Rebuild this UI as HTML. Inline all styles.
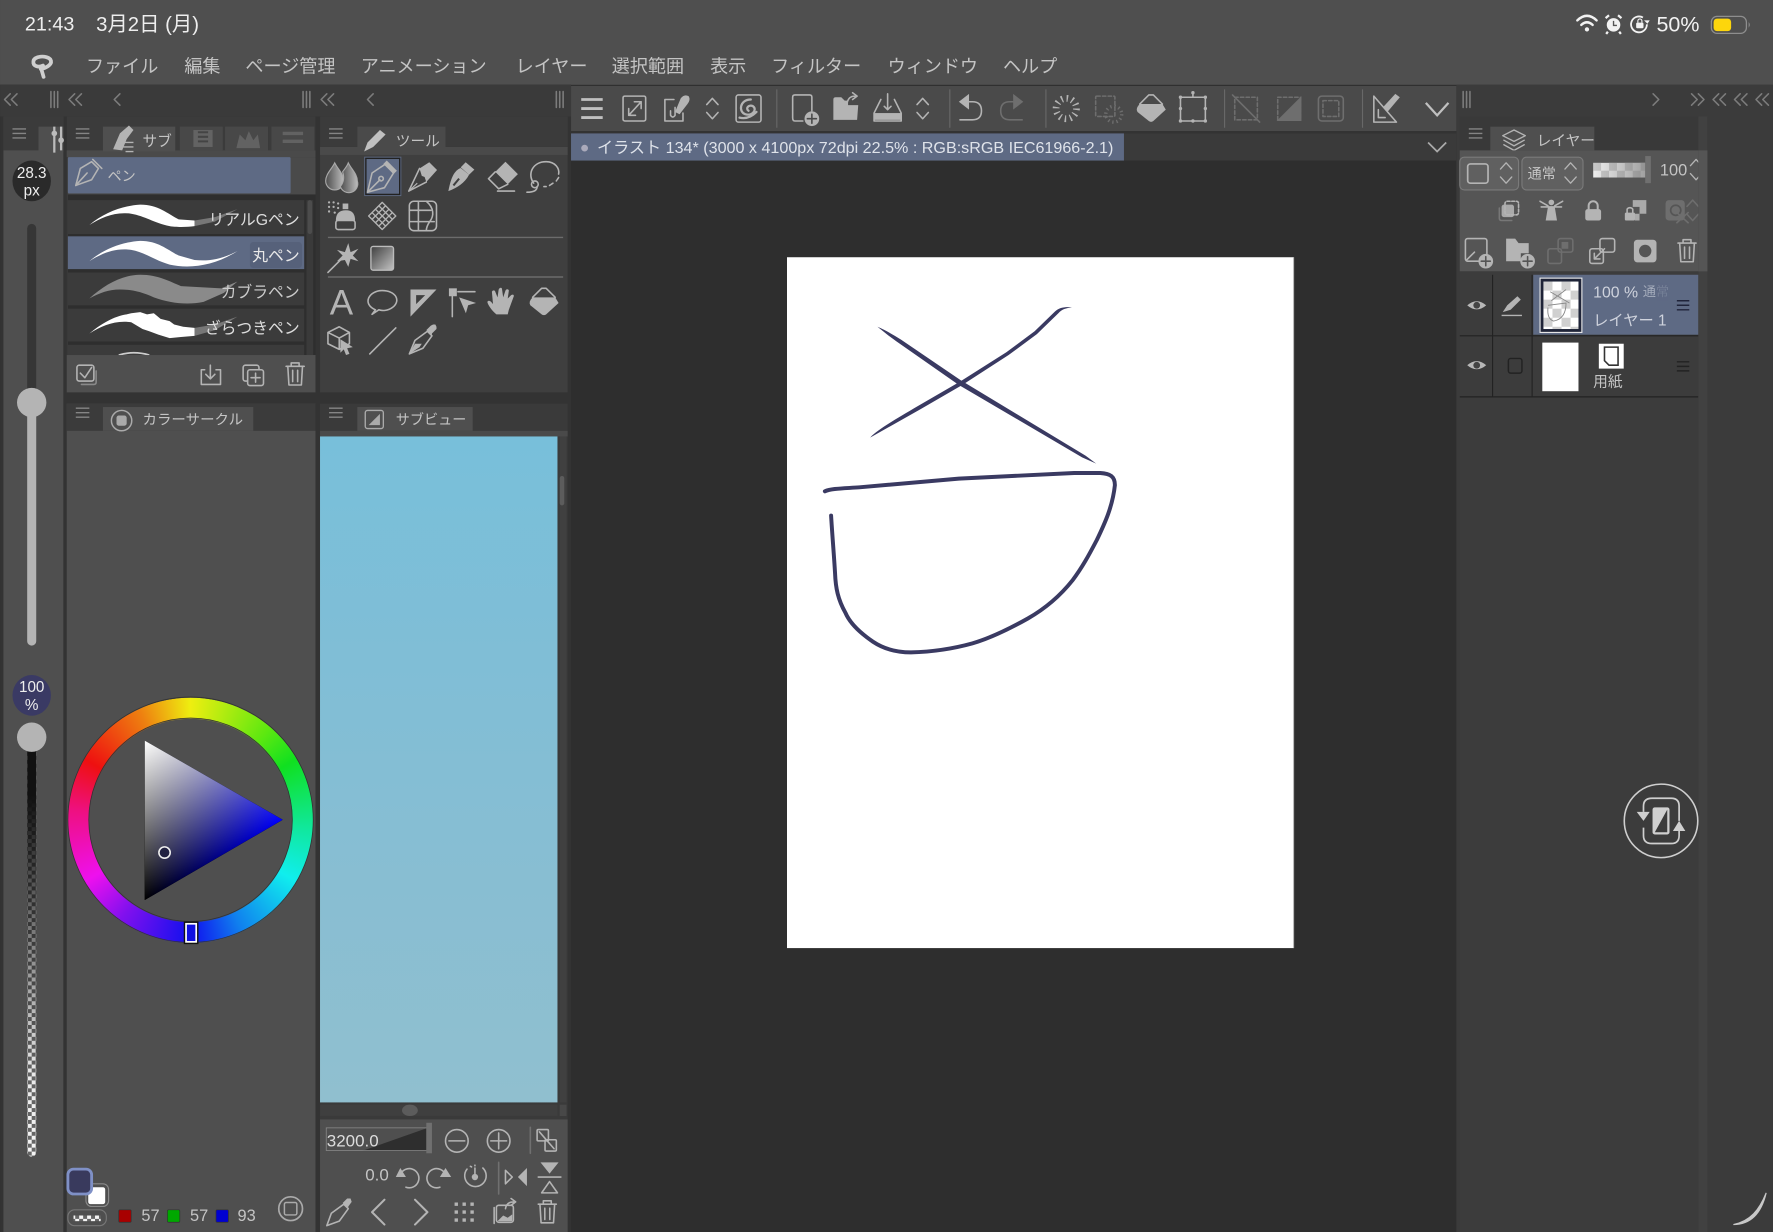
<!DOCTYPE html>
<html lang="ja">
<head>
<meta charset="utf-8">
<title>Clip Studio Paint</title>
<style>
html,body{margin:0;padding:0;background:#333;width:1773px;height:1232px;overflow:hidden}
svg{display:block}
text{font-family:"Liberation Sans","Noto Sans CJK JP",sans-serif;fill:#c4c4c4}
.ic{fill:none;stroke:#b4b4b4;stroke-width:1.4;stroke-linejoin:round;stroke-linecap:round}
.f{fill:#b4b4b4;stroke:none}
.dim{fill:none;stroke:#6e6e6e;stroke-width:1.4;stroke-linejoin:round;stroke-linecap:round}
.df{fill:#6e6e6e;stroke:none}
.nav{fill:none;stroke:#7c7c7c;stroke-width:1.4;stroke-linecap:round;stroke-linejoin:round}
.men{fill:none;stroke:#858585;stroke-width:1.2}
</style>
</head>
<body>
<svg xmlns="http://www.w3.org/2000/svg" width="1773" height="1232" viewBox="0 0 1568 1089.6">
<defs>
<pattern id="chk" width="16" height="16" patternUnits="userSpaceOnUse" x="1365" y="249"><rect width="16" height="16" fill="#fff"/><rect width="8" height="8" fill="#d0d0d0"/><rect x="8" y="8" width="8" height="8" fill="#d0d0d0"/></pattern>
<pattern id="chs" width="7" height="7" patternUnits="userSpaceOnUse"><rect width="7" height="7" fill="#f4f4f4"/><rect width="3.5" height="3.5" fill="#666"/><rect x="3.5" y="3.5" width="3.5" height="3.5" fill="#666"/></pattern>
<pattern id="cha" width="14" height="14" patternUnits="userSpaceOnUse" x="1409" y="144"><rect width="14" height="14" fill="#eee"/><rect width="7" height="7" fill="#c8c8c8"/><rect x="7" y="7" width="7" height="7" fill="#c8c8c8"/></pattern>
<linearGradient id="afade" x1="0" y1="0" x2="1" y2="0"><stop offset="0" stop-color="#777" stop-opacity="0"/><stop offset="1" stop-color="#777" stop-opacity=".65"/></linearGradient>
<linearGradient id="fade" x1="0" y1="0" x2="0" y2="1"><stop offset="0" stop-color="#111"/><stop offset=".12" stop-color="#111"/><stop offset=".8" stop-color="#111" stop-opacity=".05"/><stop offset="1" stop-color="#111" stop-opacity="0"/></linearGradient>
<linearGradient id="pv" x1="0" y1="0" x2="0" y2="1"><stop offset="0" stop-color="#78bfda"/><stop offset=".5" stop-color="#84bed4"/><stop offset="1" stop-color="#90bfcf"/></linearGradient>
<linearGradient id="tw" gradientUnits="userSpaceOnUse" x1="128" y1="655" x2="189.3" y2="760.3"><stop offset="0" stop-color="#fff"/><stop offset="1" stop-color="#000"/></linearGradient>
<linearGradient id="tb" gradientUnits="userSpaceOnUse" x1="128" y1="725" x2="250" y2="725"><stop offset="0" stop-color="#000"/><stop offset="1" stop-color="#00f"/></linearGradient>
<linearGradient id="drop" x1="0" y1="0" x2="1" y2="0"><stop offset="0" stop-color="#4c4c4c"/><stop offset="1" stop-color="#bdbdbd"/></linearGradient>
<linearGradient id="grad" x1="0" y1="0" x2="1" y2="1"><stop offset="0" stop-color="#3e3e3e"/><stop offset="1" stop-color="#c4c4c4"/></linearGradient>
<g id="m" class="men"><path d="M-6 -4H6M-6 0H6M-6 4H6"/></g>
<path id="ud" d="M-5 -3.5L0 -9L5 -3.5M-5 3.5L0 9L5 3.5"/>
<path id="dbl" d="M5 -5L0 0L5 5M11 -5L6 0L11 5"/>
<path id="dbr" d="M0 -5L5 0L0 5M6 -5L11 0L6 5"/>
<path id="grip" d="M-3 -7V7M0 -7V7M3 -7V7"/>
<path id="trash" d="M-8 -7H8M-3.500 -7V-10H3.500V-7M-6.500 -7L-5.500 9.500H5.500L6.500 -7M-2.200 -3.500V6.500M2.200 -3.500V6.500"/>
<path id="eye" d="M-9 0Q0 -8 9 0Q0 8 -9 0Z"/>
</defs>

<!-- base -->
<rect width="1568" height="1090" fill="#2e2e2e"/>
<rect width="1568" height="75" fill="#4f4f4f"/>
<rect y="75" width="505" height="1015" fill="#333"/>
<rect y="75" width="505" height="28" fill="#3a3a3a"/>
<rect x="1288" y="75" width="280" height="1015" fill="#3b3b3b"/>

<!-- status bar -->
<text x="22" y="27" font-size="17.500" style="fill:#eee">21:43</text>
<text x="85" y="27.500" font-size="18" style="fill:#eee">3月2日 (月)</text>
<g fill="none" stroke="#f2f2f2" stroke-width="2.200" stroke-linecap="round"><path d="M1395 18Q1403.500 10 1412 18M1398.500 22Q1403.500 17.500 1408.500 22"/></g><circle cx="1403.500" cy="26" r="1.900" fill="#f2f2f2"/>
<circle cx="1427" cy="22" r="6" fill="#f2f2f2"/><path d="M1420 16l3 -2.500M1434 16l-3 -2.500M1422 28l-1.500 2M1432 28l1.500 2" stroke="#f2f2f2" stroke-width="2" fill="none"/><path d="M1427 18.500V22.500H1430" stroke="#555" stroke-width="1.200" fill="none"/>
<path d="M1456.500 21.500A7 7 0 1 1 1453 15.500" stroke="#f2f2f2" stroke-width="1.600" fill="none"/><path d="M1457 21l-3 -3h5z" fill="#f2f2f2"/><rect x="1447" y="20" width="6.500" height="5" rx="1" fill="#f2f2f2"/><path d="M1448.500 20v-1.500a1.800 1.800 0 0 1 3.600 0V20" stroke="#f2f2f2" fill="none"/>
<text x="1465" y="28" font-size="19" style="fill:#f2f2f2">50%</text>
<rect x="1513.500" y="14.500" width="31" height="15" rx="5" fill="none" stroke="#8e8e8e" stroke-width="1.100"/><rect x="1515.500" y="16.500" width="15.500" height="11" rx="3" fill="#fdd60c"/><path d="M1546.500 19.500v5q2 -2.500 0 -5z" fill="#8e8e8e"/>

<!-- menu -->
<path d="M29.500 54.500C29.500 49.500 41 48.500 44.500 52.500C47 56.500 41.500 60 36 61M29.500 54.500C29 58.500 34 60 38 58M36.500 61L38.500 68" fill="none" stroke="#cfcfcf" stroke-width="3.300" stroke-linecap="round"/>
<g font-size="16">
<text x="76" y="64">ファイル</text><text x="163" y="64">編集</text><text x="217" y="64">ページ管理</text><text x="319" y="64">アニメーション</text><text x="456" y="64">レイヤー</text><text x="541" y="64">選択範囲</text><text x="628" y="64">表示</text><text x="682" y="64">フィルター</text><text x="785" y="64">ウィンドウ</text><text x="887" y="64">ヘルプ</text>
</g>

<!-- row nav -->
<g class="nav">
<use href="#dbl" x="4" y="88"/><use href="#grip" x="48" y="88"/><use href="#dbl" x="61" y="88"/><path d="M106 83L101 88L106 93"/><use href="#grip" x="271" y="88"/><use href="#dbl" x="284" y="88"/><path d="M330 83L325 88L330 93"/><use href="#grip" x="495" y="88"/>
<use href="#grip" x="1297" y="88"/><path d="M1462 83L1467 88L1462 93"/><use href="#dbr" x="1496" y="88"/><use href="#dbl" x="1515" y="88"/><use href="#dbl" x="1534" y="88"/><use href="#dbl" x="1553" y="88"/>
</g>

<!-- left slider panel -->
<rect x="3" y="103" width="53" height="987" fill="#4f4f4f"/>
<rect x="3" y="103" width="53" height="30" fill="#3b3b3b"/>
<rect x="34" y="112" width="22" height="22" fill="#4f4f4f"/>
<use href="#m" x="17" y="118"/>
<path d="M48 112V135M54 112V133" stroke="#bbb" stroke-width="2"/><circle cx="48" cy="118" r="2.500" fill="#bbb"/><circle cx="54" cy="124" r="2.500" fill="#bbb"/>
<ellipse cx="28" cy="160" rx="17" ry="18" fill="#2a2a2a"/>
<text x="28" y="157.500" font-size="13.500" text-anchor="middle" style="fill:#eee">28.3</text><text x="28" y="173" font-size="13.500" text-anchor="middle" style="fill:#eee">px</text>
<rect x="24" y="198" width="8" height="160" rx="4" fill="#363636"/>
<rect x="24" y="352" width="8" height="219" rx="4" fill="#b4b4b4"/>
<circle cx="28" cy="356" r="13" fill="#b4b4b4"/>
<ellipse cx="28" cy="615" rx="17" ry="18" fill="#3a3a64"/>
<text x="28" y="612" font-size="13.500" text-anchor="middle" style="fill:#eee">100</text><text x="28" y="628" font-size="13.500" text-anchor="middle" style="fill:#eee">%</text>
<rect x="24" y="660" width="8" height="363" rx="4" fill="url(#chs)"/>
<rect x="24" y="660" width="8" height="363" rx="4" fill="url(#fade)"/>
<circle cx="28" cy="652" r="13" fill="#b4b4b4"/>

<!-- sub tool panel -->
<rect x="59" y="103" width="220" height="244" fill="#3b3b3b"/>
<rect x="59" y="133" width="220" height="6" fill="#4a4a4a"/>
<use href="#m" x="73" y="118"/>
<rect x="91" y="112" width="64" height="22" fill="#4f4f4f"/>
<rect x="159" y="112" width="38" height="21" fill="#484848"/><rect x="199" y="112" width="38" height="21" fill="#484848"/><rect x="240" y="112" width="38" height="21" fill="#484848"/>
<path d="M100 132L106 118L114 111L118 115L112 123L108 133Z" class="f"/><path d="M109 126H118M109 130H118M111 134H118" stroke="#b4b4b4" stroke-width="1.200"/>
<text x="126" y="129" font-size="13">サブ</text>
<rect x="171" y="115" width="17" height="15" fill="#636363"/><path d="M175 117H184M175 121H184M175 125H184" stroke="#444" stroke-width="1.800"/>
<path d="M209 131L212 119L217 124L220 116L224 124L228 119L230 131Z" fill="#626262"/>
<path d="M250 118H268M250 125H268" stroke="#626262" stroke-width="3"/>
<rect x="60" y="139" width="219" height="33" fill="#4a4a4a"/>
<rect x="60" y="139" width="197" height="32" rx="1" fill="#5e6a84"/>
<g class="ic"><path d="M67 164L71 149L81 143L87 149L81 159Z"/><path d="M82 141L90 149M67 164L77 153" /></g>
<text x="95" y="160" font-size="12.500">ペン</text>
<rect x="60" y="172" width="219" height="142" fill="#2e2e2e"/>
<rect x="60" y="177" width="209" height="30" fill="#3b3b3b"/>
<rect x="60" y="209" width="209" height="29" fill="#5e6a84"/>
<rect x="60" y="241" width="209" height="29" fill="#3b3b3b"/>
<rect x="60" y="273" width="209" height="29" fill="#3b3b3b"/>
<rect x="60" y="305" width="209" height="9" fill="#3b3b3b"/>
<rect x="271" y="177" width="6" height="137" fill="#3a3a3a"/><rect x="272" y="177" width="4" height="30" rx="2" fill="#4c4c4c"/>
<g transform="translate(0 177)"><path d="M79 22C92 11 108 5 124 4C140 4 148 12 158 17L172 18L172 23C165 24 155 24 150 23C136 20 128 14 116 12C102 10 90 15 79 22Z" fill="#fff"/><path d="M172 18L190 15L210 8L190 19L172 23Z" fill="#777"/></g>
<path transform="translate(0 209)" d="M79 22C92 11 108 5 124 4C140 4 148 12 158 17L172 21C184 22 195 21 210 13C190 26 168 29 150 25C136 21 128 14 116 12C102 10 90 15 79 22Z" fill="#fff"/>
<path transform="translate(0 241)" d="M79 23C92 11 108 2 124 2C140 2 150 8 160 12L196 14L210 8L198 18L180 26C165 29 150 27 136 22C125 17 116 15 106 15C96 15 88 18 79 23Z" fill="#8a8a8a"/>
<g transform="translate(0 273)"><path d="M79 22C92 11 104 6 112 5L116 4L124 3L130 5L136 4L142 9L150 11L154 14L162 16L172 17L172 24L160 25L150 26L140 23L132 20L126 18L116 12C102 10 90 15 79 22Z" fill="#fff"/><path d="M172 17L190 14L210 7L190 19L172 24Z" fill="#777"/></g>
<path d="M105 314Q118 310 132 314" stroke="#ccc" stroke-width="1.500" fill="none"/>
<g font-size="14" text-anchor="end"><text x="265" y="199" style="fill:#ddd">リアルGペン</text>
<rect x="221" y="214" width="46" height="23" rx="3" fill="#56617a"/><text x="265" y="231" style="fill:#e8e8e8">丸ペン</text>
<text x="265" y="263" style="fill:#ccc">カブラペン</text><text x="265" y="295" style="fill:#ddd">ざらつきペン</text></g>
<rect x="59" y="314" width="220" height="33" fill="#4f4f4f"/>
<g class="ic"><rect x="68" y="323" width="15" height="14" rx="2"/><path d="M71 330L75 334L81 325"/><path d="M85 328V338Q85 340 83 340H72" stroke="#8a8a8a"/>
<path d="M181 327H178V340H195V327H191M186 323V335M182 331L186 335L190 331"/>
<rect x="215" y="323" width="14" height="14" rx="2"/><rect x="219" y="327" width="14" height="14" rx="2" fill="#4f4f4f"/><path d="M226 330V338M222 334H230"/>
<use href="#trash" x="261" y="331"/></g>

<!-- colour circle panel -->
<rect x="59" y="357" width="220" height="733" fill="#4f4f4f"/>
<rect x="59" y="357" width="220" height="24" fill="#3b3b3b"/>
<rect x="91" y="360" width="133" height="21" fill="#4f4f4f"/>
<use href="#m" x="73" y="365"/>
<circle cx="107.500" cy="372" r="9" fill="none" stroke="#aaa" stroke-width="1.300"/><rect x="103" y="367.500" width="9" height="9" rx="2" fill="#aaa"/>
<text x="126" y="375.500" font-size="12.800">カラーサークル</text>
<foreignObject x="60" y="616.500" width="217" height="217"><div xmlns="http://www.w3.org/1999/xhtml" style="width:217px;height:217px;border-radius:50%;background:conic-gradient(#eeee10 0deg,#5fe810 40deg,#10e020 60deg,#10e8a0 95deg,#10eeee 120deg,#1080ee 155deg,#1010ee 180deg,#8010ee 215deg,#ee10ee 240deg,#ee1080 275deg,#ee1010 300deg,#ee8010 335deg,#eeee10 360deg);-webkit-mask:radial-gradient(circle,transparent 89.500px,#000 90.500px);mask:radial-gradient(circle,transparent 89.500px,#000 90.500px)"></div></foreignObject>
<circle cx="168.500" cy="725" r="108.500" fill="none" stroke="#333" stroke-width=".7"/><circle cx="168.500" cy="725" r="90" fill="none" stroke="#333" stroke-width=".7"/>
<g style="isolation:isolate"><polygon points="128,655 250,725 128,796" fill="#000"/><polygon points="128,655 250,725 128,796" fill="url(#tw)" style="mix-blend-mode:screen"/><polygon points="128,655 250,725 128,796" fill="url(#tb)" style="mix-blend-mode:screen"/></g>
<circle cx="145.500" cy="754" r="5" fill="#222242" stroke="#eee" stroke-width="1.400"/>
<rect x="162.500" y="815" width="13" height="20" fill="#111"/><rect x="164.500" y="817" width="9" height="16" fill="#1010e0" stroke="#fff" stroke-width="1.500"/>
<rect x="76" y="1047" width="20" height="20" rx="5" fill="#4f4f4f" stroke="#8a8a8a"/><rect x="78" y="1050" width="15" height="15" rx="2" fill="#fff"/>
<rect x="60" y="1034" width="21" height="22" rx="5" fill="#393a5d" stroke="#7f90c6" stroke-width="2.500"/>
<rect x="60" y="1070" width="34" height="14" rx="6" fill="#4f4f4f" stroke="#777"/><rect x="65" y="1075" width="24" height="5" fill="url(#chs)"/>
<rect x="105" y="1070" width="11" height="11" rx="1" fill="#a80000" stroke="#333" stroke-width=".6"/><text x="125" y="1080" font-size="14.500">57</text>
<rect x="148" y="1070" width="11" height="11" rx="1" fill="#00a800" stroke="#333" stroke-width=".6"/><text x="168" y="1080" font-size="14.500">57</text>
<rect x="191" y="1070" width="11" height="11" rx="1" fill="#0000d0" stroke="#333" stroke-width=".6"/><text x="210" y="1080" font-size="14.500">93</text>
<circle cx="257" cy="1069" r="10.500" fill="none" stroke="#aaa" stroke-width="1.500"/><rect x="251.500" y="1063.500" width="11" height="11" rx="1.500" fill="none" stroke="#aaa" stroke-width="1.300"/>

<!-- tool panel -->
<rect x="283" y="103" width="219" height="244" fill="#3f3f3f"/>
<rect x="283" y="103" width="219" height="28" fill="#3b3b3b"/>
<rect x="283" y="130" width="219" height="7" fill="#4a4a4a"/>
<rect x="316" y="112" width="78" height="20" fill="#4a4a4a"/>
<use href="#m" x="297" y="118"/>
<path d="M322 134L325 126L336 115L341 119L330 130Z" fill="#c0c0c0"/>
<text x="350" y="129" font-size="13">ツール</text>
<!-- row 1 -->
<rect x="323.500" y="140" width="30" height="32" fill="#5e6a84" stroke="#222" stroke-width="1.300"/>
<rect x="322.500" y="139" width="32" height="34" fill="none" stroke="#5e6a84" stroke-width=".8"/>
<g transform="translate(302 156)"><path d="M-6 -12C-3 -6 2 -2 2 4A7.800 7.800 0 0 1 -14 4C-14 -2 -9 -6 -6 -12Z" fill="url(#drop)" stroke="#aaa"/><path d="M6 -12C9 -6 14 -2 14 4A7.800 7.800 0 0 1 -1 9C3 4 2 -1 1 -4C3 -7 5 -9 6 -12Z" fill="url(#drop)" stroke="#aaa"/></g>
<g transform="translate(338 156)" class="ic"><path d="M-13 14L-9 -3L3 -11L10 -3L2 10Z"/><path d="M-13 14L-2 3"/><circle cx="-1" cy="2" r="2"/><path class="f" d="M4 -14L13 -5L10 -2L1 -11Z"/></g>
<g transform="translate(374 156)"><path class="f" d="M-3 -7L5.600 -12.500L12.500 -5.600L3 5L1.500 0.500L-1 -0.500Z"/><path class="ic" d="M-12.500 13L-3 -7M-12.500 13L3 5"/><path d="M-12.500 13L-5 6" stroke="#b4b4b4"/></g>
<g transform="translate(408 156)"><path class="f" d="M3.800 -12.500L11.500 -6L6.800 -1.500L-0.600 -8Z"/><path class="f" d="M-0.600 -7.400C-6 -5 -9 0 -11.500 13C-4 10 3 6 6.800 -1.500Z"/><path d="M-7 8L-2 2" stroke="#3f3f3f" stroke-width="1.800"/></g>
<g transform="translate(444 156)"><path class="f" d="M3 -13L14 -2L5 7L-6 -4Z"/><path class="ic" d="M-6 -4L-12 2L-3 11L5 7M-4 13H11"/></g>
<g transform="translate(481 156)" class="ic"><path d="M-9 6C-15 -2 -10 -13 2 -13C10 -13 14 -7 13 -2" /><path d="M13 1L11 4M8 6L5 8M2 9L-1 9" stroke-dasharray="2 1"/><circle cx="-8" cy="7" r="3"/><path d="M-15 14Q-6 14 -6 9"/></g>
<!-- row 2 -->
<g transform="translate(302 191)"><g class="f"><circle cx="-11" cy="-12" r="1"/><circle cx="-7" cy="-12" r="1"/><circle cx="-3" cy="-11" r="1"/><circle cx="-11" cy="-8" r="1"/><circle cx="-7" cy="-8" r="1"/><circle cx="-3" cy="-7" r="1"/><circle cx="-11" cy="-4" r="1"/><circle cx="-6" cy="-3" r="1"/></g><rect class="f" x="1" y="-11" width="5" height="5"/><path class="f" d="M-5 4Q-5 -5 4 -5Q12 -5 12 4Z"/><rect class="ic" x="-5" y="4" width="17" height="8" rx="2"/></g>
<g transform="translate(338 191)" class="ic" style="stroke-width:1.200"><path d="M-12 0L0 -12L12 0L0 12ZM-6 -6L6 6M-6 6L6 -6M-3 -9L9 3M3 -9L-9 3M-9 -3L3 9M9 -3L-3 9"/></g>
<g transform="translate(374 191)" class="ic"><rect x="-12" y="-13" width="24" height="26" rx="4"/><path d="M-12 -5H7M-12 5H10M-4 -13V13M3 -13C10 -7 10 0 6 5C4 8 3 10 3 13"/></g>
<path d="M290 210H498M290 245H498" stroke="#6c6c6c" stroke-width="1.300"/>
<!-- row 3 -->
<g transform="translate(304 228)"><path class="f" d="M4 -13L6 -5L13 -8L8 -2L13 3L6 1L4 8L1 2L-6 3L-1 -2L-6 -7L1 -5Z"/><path class="ic" d="M-3 2L-14 13"/></g>
<rect x="328" y="218" width="20" height="21" rx="2" fill="url(#grad)" stroke="#bbb" stroke-width="1.200"/>
<!-- row 4 -->
<text x="302" y="278" font-size="31" text-anchor="middle" style="fill:#b4b4b4">A</text>
<g transform="translate(338 267)" class="ic"><path d="M-6 7C-18 2 -12 -10 0 -10C12 -10 17 -1 9 5C5 8 0 8 -3 7L-9 11Z"/></g>
<g transform="translate(374 267)"><path class="f" fill-rule="evenodd" d="M-11 -11H12L-11 13ZM-6 -6V2L2 -6Z"/></g>
<g transform="translate(408 267)"><rect class="f" x="-11" y="-12" width="7" height="7"/><path class="ic" d="M-8 -5V13M-3 -9H12"/><path class="f" d="M-2 -4L13 1L6 3L4 10Z"/></g>
<g transform="translate(444 267)"><path class="f" d="M-5 11C-9 8 -13 2 -13 0C-12 -2 -10 -1 -8 2L-9 -9C-8 -11 -6 -10 -6 -9L-4 -4L-3 -11C-2 -13 0 -13 0 -11L1 -4L3 -10C4 -12 6 -11 6 -10L5 -3L8 -6C10 -7 11 -6 10 -4L6 7L5 11Z"/></g>
<g transform="translate(481 267)"><path class="f" d="M-10 -4H10L13 1L2 11Q0 12.500 -2 11L-12 3Q-14 0 -10 -4Z"/><path class="ic" d="M-10 -4L-2 -12H2L10 -4"/></g>
<!-- row 5 -->
<g transform="translate(300 300)" class="ic"><path d="M-10 -6L0 -11L9 -6V4L0 9L-10 4ZM-10 -6L0 -1L9 -6M0 -1V9"/><path class="f" d="M1 0L12 7L7 8L9 13L6 14L4 9L1 12Z" stroke="#3f3f3f"/></g>
<path class="ic" d="M327 313L350 290"/>
<g transform="translate(374 300)"><path class="ic" d="M-12 13L-7 1L4 -7L8 -3L0 8Z"/><path class="f" d="M3 -8L7 -12L9 -13L11 -13L12 -11L12 -9L8 -5L8 -4Z"/><path class="f" d="M-7 4L-1 4L-3 7L-12 13Z"/></g>

<!-- subview -->
<rect x="283" y="357" width="219" height="733" fill="#3a3a3a"/>
<rect x="316" y="360" width="102" height="21" fill="#4f4f4f"/>
<rect x="283" y="381" width="219" height="5" fill="#4a4a4a"/>
<use href="#m" x="297" y="365"/>
<rect x="323" y="363" width="16" height="16" rx="2" fill="none" stroke="#aaa" stroke-width="1.200"/><path d="M326 376L336 366V376Z" fill="#aaa"/>
<text x="350" y="375.500" font-size="12.500">サブビュー</text>
<rect x="283" y="386" width="210" height="589" fill="url(#pv)"/>
<rect x="495" y="386" width="6" height="589" fill="#404040"/><rect x="495" y="421" width="4" height="26" rx="2" fill="#5c5c5c"/>
<rect x="283" y="977" width="210" height="10" fill="#3f3f3f"/><ellipse cx="362.500" cy="982" rx="7" ry="5" fill="#5c5c5c"/><rect x="495" y="977" width="6" height="10" fill="#484848"/>
<rect x="283" y="990" width="219" height="100" fill="#4f4f4f"/>
<path d="M320 1018L377 998V1018Z" fill="#2e2e2e"/>
<rect x="288.500" y="997.500" width="89" height="20" fill="none" stroke="#8a8a8a" stroke-width=".7"/>
<rect x="377" y="993" width="5" height="27" fill="#707070"/>
<text x="289" y="1014" font-size="15" style="fill:#ddd">3200.0</text>
<g class="ic"><circle cx="404" cy="1009" r="10"/><path d="M397 1009H411"/><circle cx="441" cy="1009" r="10"/><path d="M434 1009H448M441 1002V1016"/>
<path d="M469 997V1020" stroke="#707070"/>
<rect x="475" y="999" width="10" height="10" rx="1"/><rect x="482" y="1008" width="10" height="10" rx="1"/><path d="M477 1001L490 1016"/></g>
<text x="323" y="1044" font-size="15">0.0</text>
<g class="ic"><path d="M354 1039A8.500 8.500 0 1 1 359 1050"/><path class="f" d="M350 1041H359L354 1033Z"/><path d="M394 1039A8.500 8.500 0 1 0 389 1050"/><path class="f" d="M389 1041H399L394 1033Z"/>
<path d="M427 1033A9.500 9.500 0 1 1 413 1034"/><path d="M416 1031.500L417 1032M420 1030.500V1031" /><circle class="f" cx="420" cy="1041" r="2.800"/><path d="M420 1033V1041"/>
<path d="M441 1028V1056" stroke="#707070"/><path d="M447 1035L453 1041L447 1047Z"/><path class="f" d="M466 1033V1049L458 1041Z"/><path d="M476 1041H496"/><path class="f" d="M478 1028H494L486 1038Z"/><path d="M479 1055H493L486 1045Z"/></g>
<g class="ic"><g transform="translate(300 1072)"><path d="M-11 12L-7 1L4 -7L8 -3L0 8Z"/><path class="f" d="M3 -8L7 -12L10 -12L11 -9L8 -5L8 -4Z"/></g>
<path d="M340 1061L329 1072L340 1083M367 1061L378 1072L367 1083" stroke-width="1.800"/>
<path d="M402 1065h3M409 1065h3M402 1072h3M409 1072h3M402 1079h3M409 1079h3M416 1065h3M416 1072h3M416 1079h3" stroke-width="3" stroke-linecap="butt"/>
<rect x="439" y="1066" width="15" height="15" rx="2"/><path d="M437 1082V1068"/><path class="f" d="M440 1080L445 1075L449 1077L453 1074V1080Z"/><path d="M447 1069Q448 1063 454 1063M452 1060L456 1063L452 1066"/>
<use href="#trash" x="484" y="1072"/></g>

<!-- toolbar -->
<rect x="505" y="76" width="783" height="40" fill="#4a4a4a"/>
<rect x="505" y="116" width="783" height="2" fill="#333"/>
<rect x="505" y="118" width="783" height="24" fill="#3a3a3a"/>
<rect x="505" y="118" width="489" height="24" fill="#5e6a84"/>
<circle cx="517" cy="131" r="3" fill="#aab"/>
<text x="528" y="135.500" font-size="14.250" style="fill:#dfe3ea">イラスト 134* (3000 x 4100px 72dpi 22.5% : RGB:sRGB IEC61966-2.1)</text>
<path d="M1263 126L1271 134L1279 126" fill="none" stroke="#aaa" stroke-width="1.500"/>
<path d="M687 79V113M840 79V113M925 79V113M1083 79V113M1205 79V113" stroke="#686868" stroke-width="1"/>
<path d="M514 88H533M514 96H533M514 104H533" stroke="#c0c0c0" stroke-width="2.500"/>
<g class="ic">
<g transform="translate(561 96)"><rect x="-10" y="-11" width="20" height="22" rx="1.500"/><path d="M-5 6L6 -6M0 -6H6V0M-5 0V6H1"/></g>
<g transform="translate(598 96)"><path d="M-2 -8H-10V11H6V4"/><path class="f" d="M-1 3L4 -9Q7 -13 11 -11Q13 -8 10 -4L3 5Z"/><path d="M-5 2V6Q-3 9 -1 6V-1"/></g>
<use href="#ud" x="630" y="96"/>
<g transform="translate(662 96)"><rect x="-11" y="-12" width="22" height="24" rx="2"/><path d="M2 -8C-8 -8 -9 3 -3 5C3 7 8 1 4 -2C0 -4 -3 0 0 2" stroke-width="2"/><path d="M-8 8Q0 10 7 3" stroke-width="2"/></g>
<g transform="translate(711 96)"><path d="M-1 11H-8Q-10 11 -10 8V-10Q-10 -12 -8 -12H5Q7 -12 7 -10V2"/><circle class="f" cx="7" cy="9" r="6.500"/><path d="M3 9H11M7 5V13" stroke="#4a4a4a"/></g>
<g transform="translate(748 96)"><path class="f" d="M-11 10V-8Q-11 -10 -9 -10H-4L-1 -7H2V-3H11L10 10Z"/><path d="M1 -4Q2 -11 8 -11M6 -14L10 -11L6 -8"/></g>
<g transform="translate(785 96)"><path d="M-6 -8L-12 4V11H12V4L6 -8"/><path d="M0 -13V1M-3 -2L0 1L3 -2"/><rect class="f" x="-12" y="4" width="24" height="6"/></g>
<use href="#ud" x="816" y="96"/>
<g transform="translate(858 96)"><path class="f" d="M-10 -6L-1 -13V1Z"/><path d="M-1 -6H2Q10 -6 10 2Q10 10 2 10H-9"/></g>
<circle cx="943" cy="96" r="9" fill="none" stroke="#b4b4b4" stroke-width="6" stroke-dasharray="1.300 3.412" style="stroke-linecap:butt"/>
<g transform="translate(1018 96)"><path class="f" d="M-10 -4H10L13 1L2 11Q0 12.500 -2 11L-12 3Q-14 0 -10 -4Z"/><path d="M-10 -4L-2 -12H2L10 -4"/></g>
<g transform="translate(1055 96)"><rect x="-11" y="-10" width="22" height="21"/><path d="M0 -14V-10"/><g><circle class="f" cx="0" cy="-14" r="1.500"/><circle class="f" cx="-11" cy="-10" r="1.500"/><circle class="f" cx="11" cy="-10" r="1.500"/><circle class="f" cx="-11" cy="11" r="1.500"/><circle class="f" cx="11" cy="11" r="1.500"/><circle class="f" cx="-11" cy="0" r="1.500"/><circle class="f" cx="11" cy="0" r="1.500"/><circle class="f" cx="0" cy="11" r="1.500"/></g></g>
</g>
<g class="dim">
<g transform="translate(895 96)"><path class="df" d="M10 -6L1 -13V1Z"/><path d="M1 -6H-2Q-10 -6 -10 2Q-10 10 -2 10H9"/></g>
<g transform="translate(980 96)"><rect x="-11" y="-11" width="17" height="18" rx="1" stroke-dasharray="3 2"/><circle cx="5" cy="5" r="7" stroke-width="3" stroke-dasharray="1.200 2.500" style="stroke-linecap:butt"/></g>
<g transform="translate(1102 96)"><rect x="-10" y="-10" width="20" height="20" stroke-dasharray="3 2"/><path d="M-12 -12L12 12"/></g>
<g transform="translate(1140 96)"><rect x="-10" y="-10" width="20" height="20" stroke-dasharray="3 2"/><path class="df" d="M11 -11V11H-11Z"/></g>
<g transform="translate(1177 96)"><rect x="-11" y="-11" width="22" height="22" rx="3"/><rect x="-7" y="-7" width="14" height="14" stroke-dasharray="3 2"/></g>
</g>
<g transform="translate(1226 96)" class="ic"><path d="M-11 -11V12H9L-11 -11ZM-7 1V8H-1"/><path class="f" d="M-3 -1L8 -13L12 -10L1 3Z"/></g>
<path d="M1261 91L1271 102L1281 91" fill="none" stroke="#c0c0c0" stroke-width="2"/>

<!-- paper -->
<rect x="696" y="227.500" width="448" height="611" fill="#fff"/>
<rect x="1143.500" y="227.500" width="1" height="611" fill="#bbb"/>
<path d="M776 289C783 292 790 296 797 300.500L850 336.500L960 403L969.500 410L957 404.500L848 340.500L795 303.500C787 298 781 293 776 289Z" fill="#3a3a62"/>
<path d="M769.500 387C776 380 790 372 812 359L849 337.500L890 311.500L915 293L933 275.500C937 271.800 942 271.300 948 271.800C943 272.300 939 273.500 936 277L917 295.500L892 314L851 340.500L814 362L782 380Z" fill="#3a3a62"/>
<path d="M729.500 434.500C735 432 745 432 760 431L848 423.300L950 418.300L973 418.300C982 418.800 986 421.500 986 429C984 448 977 463 970 477.600C963 491 957 502 948.700 513C936 529 923 539 909 547C893 556 877 564 860 569C842 574 824 576.500 805.600 577C792 577 781 573.500 772 567.500C761 560 752 552 747.700 542C741 530 739 520 738.500 507C737.500 490 736 473 735 456" fill="none" stroke="#3a3a62" stroke-width="3.500" stroke-linecap="round" stroke-linejoin="round"/>

<!-- layer panel -->
<rect x="1291" y="103" width="219" height="30" fill="#393939"/>
<rect x="1318" y="112" width="92" height="21" fill="#4f4f4f"/>
<use href="#m" x="1305" y="118"/>
<g class="ic" style="stroke-width:1.200"><path d="M1339 115L1349 120L1339 125L1329 120Z"/><path d="M1330 124L1339 129L1348 124M1330 128L1339 133L1348 128"/></g>
<text x="1359" y="128.500" font-size="13">レイヤー</text>
<rect x="1291" y="133" width="219" height="107" fill="#555"/>
<rect x="1291" y="139" width="52" height="29" rx="4" fill="#606060" stroke="#7a7a7a"/>
<rect x="1346" y="139" width="54" height="29" rx="4" fill="#606060" stroke="#7a7a7a"/>
<rect x="1298" y="145" width="18" height="17" rx="2.500" fill="none" stroke="#b4b4b4" stroke-width="1.500"/>
<text x="1351" y="158" font-size="12.500">通常</text>
<g class="ic" style="stroke-width:1.200"><use href="#ud" x="1332" y="153"/><use href="#ud" x="1389" y="153"/><use href="#ud" x="1500" y="150"/></g>
<rect x="1409" y="144" width="46" height="13" fill="url(#cha)"/><rect x="1409" y="144" width="46" height="13" fill="url(#afade)"/>
<rect x="1455" y="138" width="5" height="24" fill="#707070"/>
<text x="1468" y="155" font-size="14.500">100</text>
<g class="ic">
<g transform="translate(1335 186)"><rect x="-4" y="-8" width="12" height="12" rx="2" stroke-dasharray="2.500 1.500"/><rect class="f" x="-7" y="-5" width="11" height="11" rx="2" opacity=".9"/><path d="M-9 -2V7Q-9 9 -7 9H2" stroke="#777"/></g>
<g transform="translate(1372 186)"><path class="f" d="M-3 -3H3L5 9H-5Z"/><path d="M-10 -8L-3 -4M10 -8L3 -4M-9 -3H9" /><circle class="f" cx="0" cy="-7" r="2.500"/></g>
<g transform="translate(1409 186)"><rect class="f" x="-7" y="-1" width="14" height="10" rx="2"/><path d="M-4 -1V-4A4 4 0 0 1 4 -4V-1" stroke-width="1.800"/></g>
<g transform="translate(1447 186)"><rect class="f" x="-10" y="2" width="9" height="7" rx="1"/><path d="M-8 2V-1A3 3 0 0 1 -3 -1V2"/><path class="f" d="M-3 -9H3V-3H-3ZM3 -3H9V3H3ZM3 3H-1V9H3ZM9 -9V-3H3V-9Z" opacity=".9"/></g>
<g transform="translate(1306 222)"><rect x="-10" y="-11" width="19" height="20" rx="2"/><path d="M-9 8L-2 1"/><circle class="f" cx="8" cy="9" r="6.500"/><path d="M4 9H12M8 5V13" stroke="#555"/></g>
<g transform="translate(1343 222)"><path class="f" d="M-11 9V-11H-3L0 -7H9V2H2V9Z"/><circle class="f" cx="8" cy="9" r="6.500"/><path d="M4 9H12M8 5V13" stroke="#555"/></g>
<g transform="translate(1417 222)"><rect x="-11" y="-2" width="12" height="13" rx="2"/><rect x="-2" y="-11" width="13" height="12" rx="2"/><path d="M-7 7L2 -2M-7 2V7H-2"/></g>
<g transform="translate(1455 222)"><rect class="f" x="-10" y="-10" width="20" height="20" rx="3"/><circle cx="0" cy="0" r="5.500" fill="#555" stroke="none"/></g>
<use href="#trash" x="1492" y="222"/>
</g>
<g class="dim">
<g transform="translate(1380 222)"><rect x="-11" y="-2" width="12" height="13" rx="2"/><rect x="-2" y="-11" width="13" height="12" rx="2"/><rect class="df" x="1" y="-8" width="6" height="6"/></g>
<g transform="translate(1484 186)"><rect class="df" x="-11" y="-9" width="17" height="18" rx="3"/><circle cx="-2" cy="0" r="4.500" stroke="#555" stroke-width="1.500"/><path d="M-1 2L9 11M9 2L-1 11"/></g>
<use href="#ud" x="1497" y="186"/>
</g>
<rect x="1291" y="240" width="211" height="112" fill="#3c3c3c"/>
<rect x="1356" y="243" width="146" height="53" fill="#5e6a84"/>
<path d="M1291 297H1502M1291 351H1502M1320 243V351M1355 243V351" stroke="#222" stroke-width="1"/>
<g fill="#b8b8b8" stroke="#3c3c3c" stroke-width=".8"><use href="#eye" x="1306" y="270"/><use href="#eye" x="1306" y="323"/></g>
<circle cx="1306" cy="270" r="3" fill="#444"/><circle cx="1306" cy="323" r="3" fill="#444"/>
<path d="M1329 276L1333 270L1342 262L1345 265L1336 274Z" fill="#b4b4b4"/><path d="M1328 279H1346" stroke="#b4b4b4" stroke-width="1.200"/>
<rect x="1334" y="317" width="12" height="13" rx="2" fill="none" stroke="#222" stroke-width="1.300"/>
<rect x="1362" y="246" width="37" height="48" fill="#1f2438" stroke="#e8e8e8" stroke-width="1"/>
<rect x="1365" y="249" width="31" height="42" fill="url(#chk)"/>
<path d="M1371 258L1388 268M1372 266L1385 256M1369 270L1385 268Q1385 282 1374 284Q1368 282 1369 272" fill="none" stroke="#888" stroke-width=".8"/>
<text x="1409" y="263" font-size="14" style="fill:#cfd3dd">100 %</text><text x="1453" y="262" font-size="11.500" style="fill:#b9bfcc;opacity:.8">通常</text>
<rect x="1465" y="250" width="10" height="16" fill="#5e6a84" opacity=".7"/>
<text x="1409" y="288" font-size="13.500" style="fill:#cfd3dd">レイヤー 1</text>
<path d="M1483 266H1494M1483 270H1494M1483 274H1494" stroke="#20243a" stroke-width="1.300"/>
<rect x="1364" y="303" width="32" height="43" fill="#fff"/>
<rect x="1414" y="304" width="22" height="22" fill="#fff"/><path d="M1419 307H1431V323H1423L1419 319Z" fill="#fff" stroke="#333" stroke-width="1.400"/>
<text x="1409" y="342" font-size="13">用紙</text>
<path d="M1483 320H1494M1483 324H1494M1483 328H1494" stroke="#222" stroke-width="1.300"/>
<rect x="1291" y="352" width="211" height="738" fill="#3c3c3c"/>
<rect x="1502" y="103" width="8" height="987" fill="#414141"/>
<rect x="1502" y="133" width="8" height="107" fill="#555"/>

<!-- rotate button -->
<g transform="translate(1469 726)">
<circle r="32.500" fill="none" stroke="#cfcfcf" stroke-width="1.400"/>
<rect x="-8" y="-12.500" width="16" height="25" rx="2.500" fill="#d0d0d0" stroke="#3c3c3c"/><path d="M-5.500 10L5.500 -10V10Z" fill="#3c3c3c"/>
<path d="M-15.500 -8V-13Q-15.500 -20 -8 -20H9Q16 -20 16 -13V0M-15.500 6V13Q-15.500 20 -8 20H9Q16 20 16 13V9" fill="none" stroke="#cfcfcf" stroke-width="1.500"/>
<path d="M-21.500 -8H-10L-15.500 0ZM10.500 9H21.500L16 0Z" fill="#cfcfcf"/>
</g>
<path d="M1533 1083C1548 1080 1556 1070 1562 1055C1558 1072 1549 1083 1533 1083Z" fill="#c8c8c8" stroke="#c8c8c8"/>
</svg>
</body>
</html>
